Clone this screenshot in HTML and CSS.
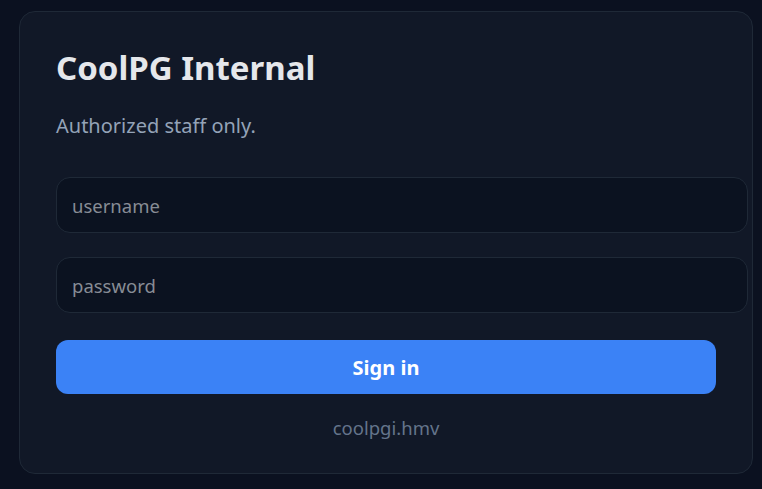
FILE: index.html
```html
<!DOCTYPE html>
<html lang="en">
<head>
<meta charset="utf-8">
<title>CoolPG Internal</title>
<link rel="stylesheet" href="styles.css">
</head>
<body>
<main class="card">
  <h1 class="title">CoolPG Internal</h1>
  <p class="subtitle">Authorized staff only.</p>
  <form class="form">
    <input class="field" type="text" placeholder="username">
    <input class="field" type="password" placeholder="password">
    <button class="submit" type="button">Sign in</button>
  </form>
  <p class="footer">coolpgi.hmv</p>
</main>
</body>
</html>
```
FILE: styles.css
```css
html, body {
  margin: 0;
  height: 100%;
}
body {
  background: #0b1120;
  font-family: "Noto Sans", "Open Sans", sans-serif;
  padding: 11px 0 0 19px;
  box-sizing: border-box;
  overflow: hidden;
}
.card {
  width: 660px;
  padding: 36px 36px 33px;
  background: #111827;
  border: 1px solid #1f2937;
  border-radius: 16px;
}
.title {
  margin: 0;
  font-size: 33px;
  line-height: 40px;
  font-weight: 700;
  color: #e5e7eb;
}
.subtitle {
  margin: 24px 0 0;
  font-size: 20px;
  line-height: 28px;
  color: #94a3b8;
}
.form {
  margin-top: 37px;
  display: flex;
  flex-direction: column;
}
.field {
  display: block;
  width: 100%;
  height: 22px;
  padding: 16px 15px;
  margin: 0 0 24px;
  background: #0b1220;
  border: 1px solid #1f2937;
  border-radius: 14px;
  color: #e5e7eb;
  font: 18.5px "Noto Sans", "Open Sans", sans-serif;
  outline: none;
}
.field::placeholder {
  color: #878c95;
}
.submit {
  margin-top: 3px;
  height: 54px;
  width: 100%;
  border: 0;
  border-radius: 12px;
  background: #3b82f6;
  color: #ffffff;
  font: 700 20px "Noto Sans", "Open Sans", sans-serif;
}
.footer {
  margin: 22px 0 0;
  text-align: center;
  font-size: 18.5px;
  line-height: 24px;
  color: #64748b;
}
```
